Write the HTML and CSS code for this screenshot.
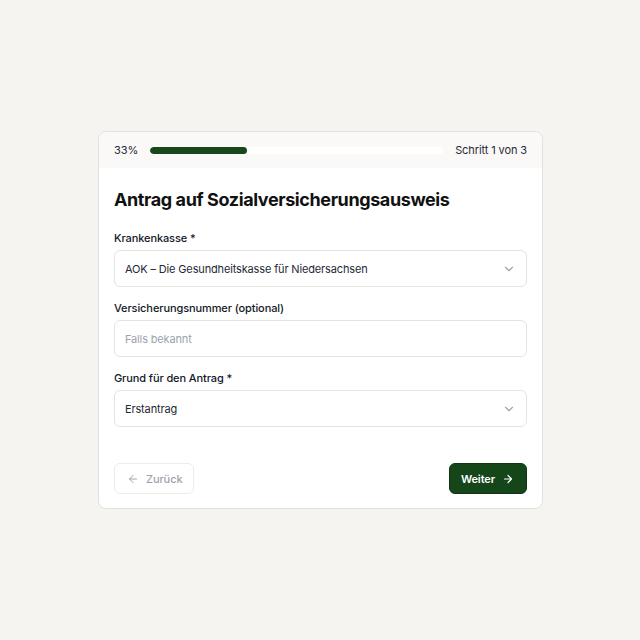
FILE: index.html
```html
<!DOCTYPE html>
<html lang="de">
<head>
<meta charset="utf-8">
<title>Antrag</title>
<link rel="stylesheet" href="styles.css">
</head>
<body>
<div class="page">
  <div class="card">
    <div class="progress-head">
      <span class="pct">33%</span>
      <div class="track"><div class="fill" style="width:33%"></div></div>
      <span class="step">Schritt 1 von 3</span>
    </div>
    <div class="body">
      <h1 class="title">Antrag auf Sozialversicherungsausweis</h1>
      <div class="field">
        <label class="label">Krankenkasse *</label>
        <div class="control select">
          <span class="value">AOK – Die Gesundheitskasse für Niedersachsen</span>
          <svg class="chev" width="14" height="14" viewBox="0 0 24 24" fill="none" stroke="currentColor" stroke-width="2" stroke-linecap="round" stroke-linejoin="round"><path d="M6 9l6 6 6-6"/></svg>
        </div>
      </div>
      <div class="field">
        <label class="label">Versicherungsnummer (optional)</label>
        <div class="control">
          <span class="placeholder">Falls bekannt</span>
        </div>
      </div>
      <div class="field">
        <label class="label">Grund für den Antrag *</label>
        <div class="control select">
          <span class="value">Erstantrag</span>
          <svg class="chev" width="14" height="14" viewBox="0 0 24 24" fill="none" stroke="currentColor" stroke-width="2" stroke-linecap="round" stroke-linejoin="round"><path d="M6 9l6 6 6-6"/></svg>
        </div>
      </div>
      <div class="actions">
        <button class="btn back">
          <svg class="ico" width="12" height="12" viewBox="0 0 24 24" fill="none" stroke="currentColor" stroke-width="2" stroke-linecap="round" stroke-linejoin="round"><path d="M19 12H5M12 19l-7-7 7-7"/></svg>
          <span>Zurück</span>
        </button>
        <button class="btn next">
          <span>Weiter</span>
          <svg class="ico" width="12" height="12" viewBox="0 0 24 24" fill="none" stroke="currentColor" stroke-width="2.4" stroke-linecap="round" stroke-linejoin="round"><path d="M5 12h14M12 5l7 7-7 7"/></svg>
        </button>
      </div>
    </div>
  </div>
</div>
</body>
</html>
```
FILE: styles.css
```css
* { box-sizing: border-box; }
html, body { margin: 0; padding: 0; }
body {
  background: #f5f4f1;
  font-family: Inter, "Liberation Sans", sans-serif;
  color: #111827;
}
.page {
  width: 640px;
  height: 640px;
  display: flex;
  justify-content: flex-start;
  padding: 131px 0 0 98px;
}
.card {
  width: 445px;
  height: 378px;
  background: #fff;
  border: 1px solid #e3e1dd;
  border-radius: 8px;
  overflow: hidden;
}
.progress-head {
  display: flex;
  align-items: center;
  gap: 12px;
  height: 36px;
  padding: 0 15px;
  background: #faf9f7;
  font-size: 11px;
  letter-spacing: -0.1px;
  color: #1f2937;
}
.track {
  flex: 1;
  height: 7px;
  background: #ffffff;
  border-radius: 4px;
  overflow: hidden;
}
.fill {
  height: 100%;
  background: #17471a;
  border-radius: 4px;
}
.body {
  padding: 18px 15px 15px;
}
.title {
  margin: 0 0 15px;
  font-size: 18px;
  line-height: 28px;
  font-weight: 700;
  color: #111111;
  letter-spacing: -0.4px;
}
.field { margin-bottom: 12px; }
.label {
  display: block;
  font-size: 11px;
  line-height: 18px;
  font-weight: 500;
  color: #111827;
  margin-bottom: 3px;
  letter-spacing: -0.1px;
}
.control {
  height: 37px;
  border: 1px solid #e5e3e0;
  border-radius: 6px;
  display: flex;
  align-items: center;
  justify-content: space-between;
  padding: 0 10px;
  font-size: 11px;
  letter-spacing: -0.15px;
}
.value { color: #1f2937; }
.placeholder { color: #9ca3af; }
.chev { color: #9ca3af; flex-shrink: 0; }
.actions {
  display: flex;
  justify-content: space-between;
  margin-top: 36px;
}
.btn {
  display: inline-flex;
  align-items: center;
  gap: 7px;
  height: 31px;
  border-radius: 6px;
  font-family: Inter, "Liberation Sans", sans-serif;
  font-size: 11px;
  letter-spacing: -0.1px;
  font-weight: 600;
  cursor: pointer;
}
.ico { flex-shrink: 0; }
.back {
  padding: 0 11px 0 12px;
  background: #fff;
  border: 1px solid #eeece9;
  color: #9ca3af;
  font-weight: 500;
}
.next {
  padding: 0 12px 0 11px;
  background: #15461a;
  border: 1px solid #0f3513;
  color: #fff;
}
```
